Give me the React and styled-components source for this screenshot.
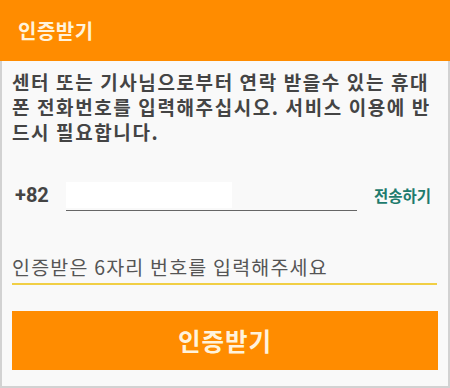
import styled, { createGlobalStyle } from "styled-components";

const GlobalStyle = createGlobalStyle`
  html, body {
    margin: 0;
    padding: 0;
    background: #f9f9f9;
  }
  body {
    font-family: "Noto Sans CJK KR", "Noto Sans", sans-serif;
  }
`;

const Screen = styled.div`
  width: 450px;
  height: 388px;
  display: flex;
  flex-direction: column;
  box-sizing: border-box;
`;

const Header = styled.header`
  height: 61px;
  flex-shrink: 0;
  background-color: #ff8c00;
  display: flex;
  align-items: center;
  padding-left: 18px;
  box-shadow: 0 1px 2px rgba(0, 0, 0, 0.15);
`;

const Title = styled.h1`
  margin: 0;
  color: #fff3dc;
  font-size: 20px;
  font-weight: 700;
  letter-spacing: 0.5px;
`;

const Body = styled.main`
  flex: 1;
  background: #f9f9f9;
  border: 2px solid #d2d2d2;
  border-top: none;
  padding: 8px 10px 0 10px;
  display: flex;
  flex-direction: column;
`;

const Notice = styled.p`
  margin: 0;
  color: #444;
  font-size: 19px;
  font-weight: 700;
  line-height: 25px;
  letter-spacing: 1.6px;
`;

const PhoneRow = styled.div`
  display: flex;
  align-items: flex-start;
  margin-top: 33px;
  height: 36px;
`;

const Prefix = styled.span`
  width: 51px;
  padding-left: 3px;
  line-height: 36px;
  color: #444;
  font-size: 20px;
  font-weight: 700;
  font-family: "Roboto", sans-serif;
`;

const PhoneField = styled.div`
  margin-top: 5px;
  width: 291px;
  height: 28px;
  border-bottom: 1.5px solid #666;
`;

const WhiteBox = styled.div`
  width: 166px;
  height: 26px;
  background: #fff;
`;

const SendLink = styled.span`
  margin-left: 17px;
  line-height: 36px;
  color: #1e7b6d;
  font-size: 15.5px;
  font-weight: 700;
`;

const CodeField = styled.div`
  margin-top: 36px;
  margin-right: 1px;
  height: 34px;
  border-bottom: 2px solid #f1cf45;
  display: flex;
  align-items: center;
`;

const Placeholder = styled.span`
  color: #555;
  font-size: 19.5px;
  letter-spacing: 1.2px;
`;

const SubmitButton = styled.button`
  margin-top: 26px;
  height: 59px;
  border: none;
  background: #ff8c00;
  color: #fff3dc;
  font-family: inherit;
  font-size: 24.5px;
  font-weight: 700;
  letter-spacing: 1px;
`;

export default function App() {
  return (
    <>
      <GlobalStyle />
      <Screen>
        <Header>
          <Title>인증받기</Title>
        </Header>
        <Body>
          <Notice>
            센터 또는 기사님으로부터 연락 받을수 있는 휴대폰 전화번호를 입력해주십시오. 서비스 이용에 반드시 필요합니다.
          </Notice>
          <PhoneRow>
            <Prefix>+82</Prefix>
            <PhoneField>
              <WhiteBox />
            </PhoneField>
            <SendLink>전송하기</SendLink>
          </PhoneRow>
          <CodeField>
            <Placeholder>인증받은 6자리 번호를 입력해주세요</Placeholder>
          </CodeField>
          <SubmitButton>인증받기</SubmitButton>
        </Body>
      </Screen>
    </>
  );
}
